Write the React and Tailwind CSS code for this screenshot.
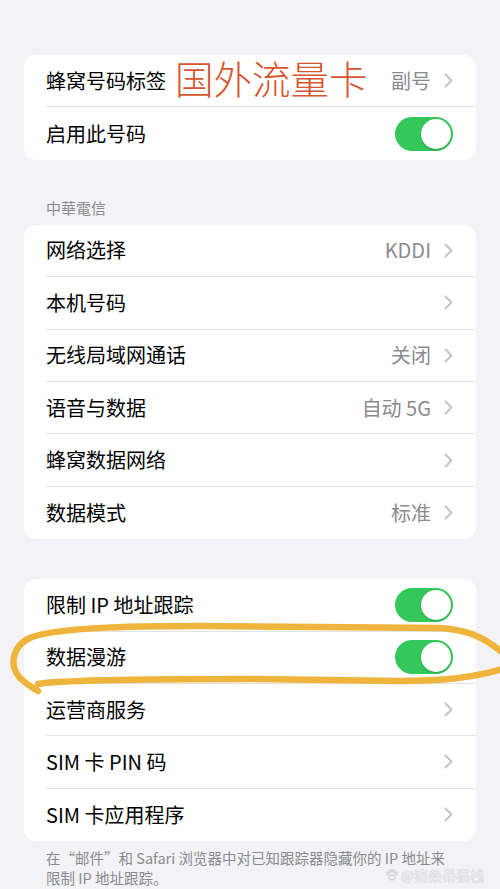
import React from 'react';

const font = { fontFamily: '"Noto Sans CJK SC", "Noto Sans", sans-serif' };

const Chevron = () => (
  <svg width="9" height="15" viewBox="0 0 9 15" className="shrink-0">
    <polyline points="1.5,1.5 7.5,7.5 1.5,13.5" fill="none" stroke="#c4c4c7" strokeWidth="2" strokeLinecap="round" strokeLinejoin="round" />
  </svg>
);

const Toggle = () => (
  <div className="w-[58px] h-[34px] rounded-full bg-[#34c759] p-[2px] flex justify-end shrink-0">
    <div className="w-[30px] h-[30px] rounded-full bg-white shadow-[0_1px_2px_rgba(0,0,0,0.2)]"></div>
  </div>
);

const Row = ({ label, value, toggle, last }) => (
  <div className="h-[52.4px] pl-[22px] flex">
    <div className={`flex-1 flex items-center pr-[23px] ${last ? '' : 'border-b border-[#e3e3e6]'}`}>
      <span className="flex-1 text-[20px] text-black leading-none">{label}</span>
      {toggle ? (
        <Toggle />
      ) : (
        <div className="flex items-center gap-[13px]">
          {value && <span className="text-[20px] text-[#8a8a8e] leading-none">{value}</span>}
          <Chevron />
        </div>
      )}
    </div>
  </div>
);

const Card = ({ rows }) => (
  <div className="mx-[24px] bg-white rounded-[12px] overflow-hidden">
    {rows.map((r, i) => (
      <Row key={r.label} {...r} last={i === rows.length - 1} />
    ))}
  </div>
);

export default function App() {
  return (
    <div className="relative w-[500px] h-[889px] bg-[#f2f2f7] overflow-hidden" style={font}>
      <div className="pt-[55px]">
        <Card
          rows={[
            { label: '蜂窝号码标签', value: '副号' },
            { label: '启用此号码', toggle: true },
          ]}
        />
        <div className="pt-[39px] pb-[8px] pl-[46px] text-[15px] leading-[18px] text-[#8a8a8e]" style={{ fontFamily: '"Noto Sans CJK TC", "Noto Sans", sans-serif' }}>
          中華電信
        </div>
        <Card
          rows={[
            { label: '网络选择', value: 'KDDI' },
            { label: '本机号码' },
            { label: '无线局域网通话', value: '关闭' },
            { label: '语音与数据', value: '自动 5G' },
            { label: '蜂窝数据网络' },
            { label: '数据模式', value: '标准' },
          ]}
        />
        <div className="h-[40px]"></div>
        <Card
          rows={[
            { label: '限制 IP 地址跟踪', toggle: true },
            { label: '数据漫游', toggle: true },
            { label: '运营商服务' },
            { label: 'SIM 卡 PIN 码' },
            { label: 'SIM 卡应用程序' },
          ]}
        />
        <div className="pt-[7px] pl-[46px] pr-[40px] text-[14.5px] leading-[20px] text-[#8a8a8e]">
          在“邮件”和 Safari 浏览器中对已知跟踪器隐藏你的 IP 地址来
          <br />
          限制 IP 地址跟踪。
        </div>
      </div>

      {/* 红色标注 */}
      <div className="absolute left-[175px] top-[58px] text-[38.5px] leading-none font-light text-[#d6542f]">
        国外流量卡
      </div>

      {/* 黄色圈 */}
      <svg className="absolute left-0 top-0 pointer-events-none" width="500" height="889" viewBox="0 0 500 889">
        <path
          d="M 502 652 C 484 638 470 630 440 628 L 200 626 C 120 626 60 628 32 637 C 10 646 10 668 20 678 C 26 684 33 688 38 691 M 38 684 C 60 680 150 679 250 679 L 400 681 C 450 681 480 676 502 669"
          fill="none"
          stroke="#efb43c"
          strokeWidth="6.5"
          strokeLinecap="round"
          strokeLinejoin="round"
        />
      </svg>

      {/* 水印 */}
      <div className="absolute left-[385px] top-[868px] flex items-center gap-[2px] text-[14px] leading-none text-[#ececf0] [text-shadow:0_0_1px_rgba(120,120,130,0.5)]">
        <svg width="14" height="14" viewBox="0 0 14 14" className="shrink-0">
          <g fill="none" stroke="#c8c8cc" strokeWidth="1">
            <ellipse cx="7" cy="9.5" rx="3.2" ry="2.6" />
            <circle cx="3" cy="5.5" r="1.4" />
            <circle cx="5.5" cy="3" r="1.4" />
            <circle cx="8.5" cy="3" r="1.4" />
            <circle cx="11" cy="5.5" r="1.4" />
          </g>
        </svg>
        <span>@猪桑帚猫栈</span>
      </div>
    </div>
  );
}
